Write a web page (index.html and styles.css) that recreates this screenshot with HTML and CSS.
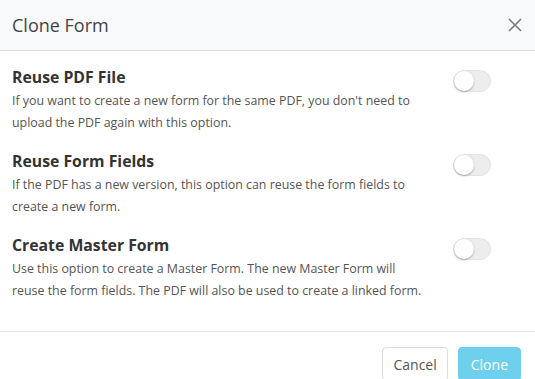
FILE: index.html
```html
<!DOCTYPE html>
<html lang="en">
<head>
    <meta charset="UTF-8">
    <meta name="viewport" content="width=device-width, initial-scale=1.0">
    <title>Clone Form</title>
    <link rel="stylesheet" href="styles.css">
</head>
<body>
    <div class="modal">
        <div class="modal-header">
            <h2>Clone Form</h2>
            <button class="close" aria-label="Close">
                <svg width="14" height="14" viewBox="0 0 14 14">
                    <path d="M1 1L13 13M13 1L1 13" stroke="#7a7a7a" stroke-width="1.6" fill="none"/>
                </svg>
            </button>
        </div>

        <div class="modal-body">
            <div class="option">
                <div class="option-text">
                    <h3>Reuse PDF File</h3>
                    <p>If you want to create a new form for the same PDF, you don't need to upload the PDF again with this option.</p>
                </div>
                <span class="switch"><span class="knob"></span></span>
            </div>
            <div class="option">
                <div class="option-text">
                    <h3>Reuse Form Fields</h3>
                    <p>If the PDF has a new version, this option can reuse the form fields to create a new form.</p>
                </div>
                <span class="switch"><span class="knob"></span></span>
            </div>
            <div class="option">
                <div class="option-text">
                    <h3>Create Master Form</h3>
                    <p>Use this option to create a Master Form. The new Master Form will reuse the form fields. The PDF will also be used to create a linked form.</p>
                </div>
                <span class="switch"><span class="knob"></span></span>
            </div>
        </div>

        <div class="modal-footer">
            <button class="btn btn-default">Cancel</button>
            <button class="btn btn-primary">Clone</button>
        </div>
    </div>
</body>
</html>
```

FILE: styles.css
```css
body {
    font-family: "Open Sans", Arial, sans-serif;
    margin: 0;
    padding: 0;
    background-color: #fff;
    color: #333;
}
.modal {
    width: 535px;
}
.modal-header {
    display: flex;
    align-items: center;
    justify-content: space-between;
    height: 50px;
    padding: 0 12px;
    background-color: #f8f9fb;
    border-bottom: 1px solid #e2e3e5;
}
.modal-header h2 {
    margin: 0;
    font-size: 18px;
    font-weight: 400;
    color: #444;
}
.close {
    display: flex;
    padding: 0;
    margin-right: 1px;
    border: none;
    background: none;
    cursor: pointer;
}
.modal-body {
    padding: 13px 12px 15px;
}
.option {
    display: flex;
    align-items: flex-start;
    margin-bottom: 14px;
}
.option-text {
    flex: 0 0 415px;
}
.option h3 {
    margin: 0;
    font-size: 15.8px;
    line-height: 26px;
    font-weight: 700;
    color: #333;
}
.option p {
    margin: 0;
    font-size: 12.4px;
    line-height: 22px;
    color: #555;
}
.switch {
    position: relative;
    display: block;
    width: 38px;
    height: 22px;
    margin: 6px 0 0 26px;
    box-sizing: border-box;
    border: 1px solid #e3e3e6;
    border-radius: 11px;
    background-color: #ededf0;
}
.knob {
    position: absolute;
    top: 0;
    left: 0;
    width: 20px;
    height: 20px;
    border-radius: 50%;
    background-color: #fff;
    box-shadow: 0 1px 2px rgba(0, 0, 0, 0.3);
}
.modal-footer {
    display: flex;
    justify-content: flex-end;
    gap: 10px;
    padding: 15px 14px 0;
    border-top: 1px solid #e2e3e5;
}
.btn {
    height: 34px;
    font-family: inherit;
    font-size: 14px;
    border-radius: 4px;
    cursor: pointer;
}
.btn-default {
    padding: 0 10px;
    background-color: #fff;
    color: #555;
    border: 1px solid #dcdde0;
}
.btn-primary {
    padding: 0 12px;
    background-color: #6fd0ee;
    color: #fff;
    border: 1px solid #6fd0ee;
}
```
